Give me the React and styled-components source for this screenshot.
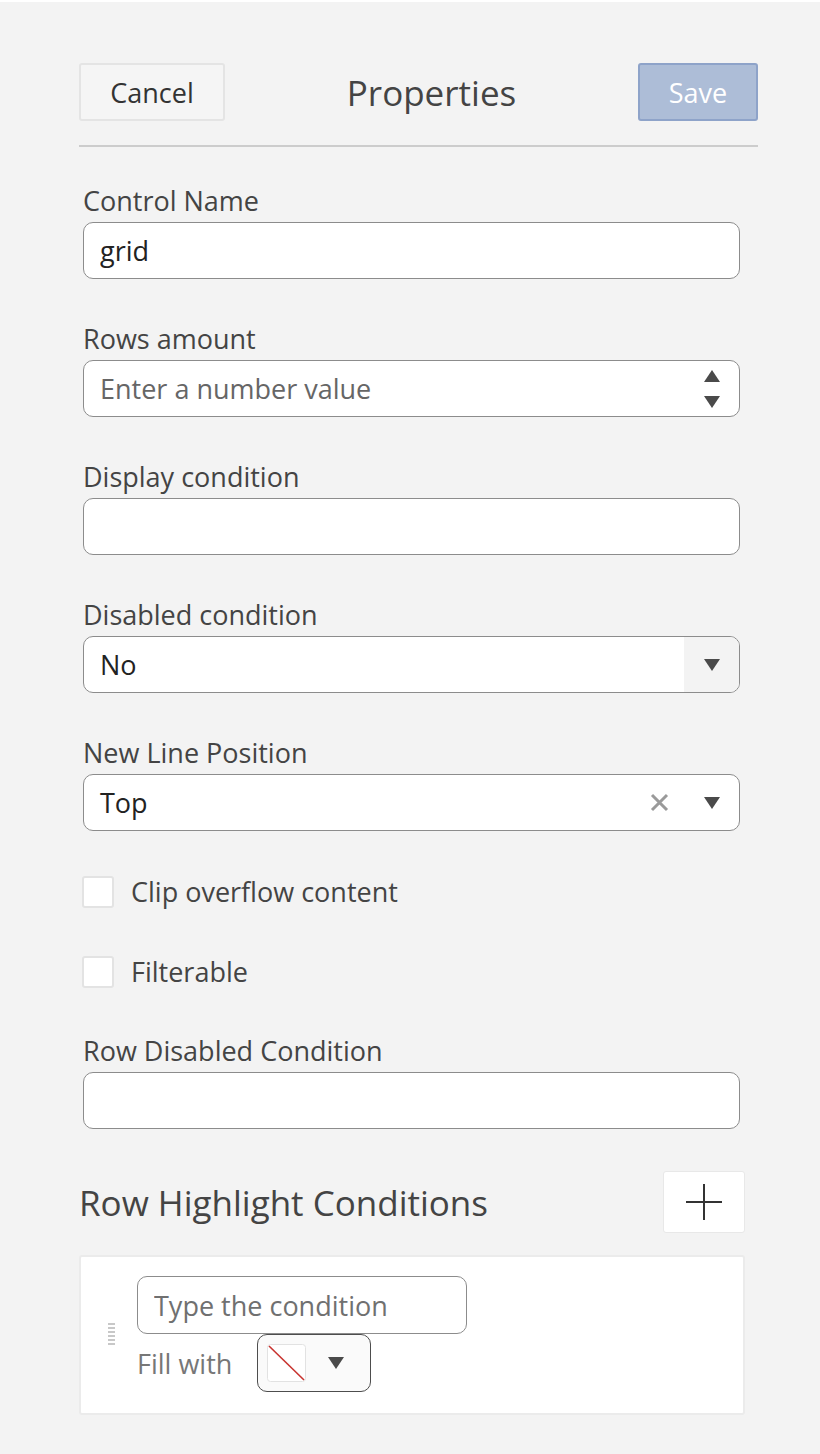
import React from 'react';
import styled, { createGlobalStyle } from 'styled-components';

const GlobalStyle = createGlobalStyle`
  html, body {
    margin: 0;
    padding: 0;
    background: #f3f3f3;
  }
  body {
    border-top: 2px solid #ffffff;
    font-family: "Open Sans", "Noto Sans", sans-serif;
    color: #444;
  }
  * { box-sizing: border-box; }
`;

const Page = styled.div`
  width: 679px;
  margin-left: 79px;
  padding-top: 61px;
  padding-bottom: 38px;
`;

const Header = styled.div`
  display: flex;
  align-items: center;
  justify-content: space-between;
  height: 58px;
`;

const HeaderButton = styled.button`
  height: 58px;
  width: ${p => (p.primary ? '120px' : '146px')};
  border-radius: 3px;
  font-family: inherit;
  font-size: 27px;
  cursor: pointer;
  background: ${p => (p.primary ? '#adbdd7' : '#f5f5f5')};
  border: 2px solid ${p => (p.primary ? '#8ea3c9' : '#e4e4e4')};
  color: ${p => (p.primary ? '#ffffff' : '#333')};
`;

const Title = styled.h1`
  margin: 0;
  font-size: 35px;
  font-weight: 400;
  color: #444;
`;

const Divider = styled.hr`
  margin: 24px 0 0;
  border: 0;
  height: 2px;
  background: #cccccc;
`;

const Form = styled.div`
  padding: 39px 18px 0 4px;
`;

const Field = styled.div`
  margin-bottom: 45px;
`;

const Label = styled.div`
  font-size: 27px;
  line-height: 30px;
  height: 30px;
  color: #444;
  margin-bottom: 6px;
`;

const InputBox = styled.div`
  display: flex;
  align-items: center;
  height: 57px;
  background: #fff;
  border: 1px solid #8c8c8c;
  border-radius: 10px;
  overflow: hidden;
`;

const TextInput = styled.input`
  flex: 1;
  min-width: 0;
  height: 100%;
  border: 0;
  outline: none;
  padding: 0 16px;
  font-family: inherit;
  font-size: 27px;
  color: #222;
  background: transparent;
  &::placeholder { color: #666; }
`;

const Triangle = styled.span`
  display: block;
  width: 0;
  height: 0;
  border-left: 8px solid transparent;
  border-right: 8px solid transparent;
  ${p => (p.up
    ? 'border-bottom: 12px solid #4a4a4a;'
    : 'border-top: 12px solid #4a4a4a;')}
`;

const Spinner = styled.div`
  display: flex;
  flex-direction: column;
  gap: 14px;
  padding-right: 19px;
`;

const SelectValue = styled.div`
  flex: 1;
  padding: 0 16px;
  font-size: 27px;
  color: #222;
`;

const ArrowZone = styled.div`
  display: flex;
  align-items: center;
  justify-content: center;
  width: 55px;
  height: 100%;
  background: ${p => (p.shaded ? '#f3f3f3' : 'transparent')};
`;

const ClearIcon = styled.svg`
  width: 19px;
  height: 19px;
  margin-right: 15px;
`;

const CheckRow = styled.label`
  display: flex;
  align-items: center;
  gap: 17px;
  height: 32px;
  margin-left: -1px;
  margin-bottom: 48px;
  font-size: 27px;
  line-height: 32px;
  color: #444;
`;

const CheckBox = styled.span`
  width: 32px;
  height: 32px;
  background: #fff;
  border: 2px solid #e3e3e3;
  border-radius: 3px;
`;

const Section = styled.div`
  width: 666px;
`;

const SectionHead = styled.div`
  display: flex;
  align-items: center;
  justify-content: space-between;
  margin-top: -3px;
`;

const SectionTitle = styled.h2`
  margin: 0;
  font-size: 35px;
  font-weight: 400;
  color: #444;
`;

const AddButton = styled.button`
  width: 82px;
  height: 62px;
  background: #fff;
  border: 1px solid #e8e8e8;
  border-radius: 3px;
  display: flex;
  align-items: center;
  justify-content: center;
  cursor: pointer;
`;

const Card = styled.div`
  margin-top: 22px;
  display: flex;
  align-items: center;
  background: #fff;
  border: 2px solid #ebebeb;
  border-radius: 3px;
  padding: 19px 0 21px 27px;
`;

const Handle = styled.div`
  width: 7px;
  height: 22px;
  margin-right: 22px;
  background: repeating-linear-gradient(
    to bottom,
    #c8c8c8 0,
    #c8c8c8 2px,
    transparent 2px,
    transparent 4px
  );
`;

const CardBody = styled.div`
  display: flex;
  flex-direction: column;
`;

const ConditionInput = styled.input`
  width: 330px;
  height: 58px;
  border: 1px solid #8c8c8c;
  border-radius: 10px;
  padding: 0 16px;
  font-family: inherit;
  font-size: 27px;
  outline: none;
  &::placeholder { color: #707070; }
`;

const FillRow = styled.div`
  display: flex;
  align-items: center;
  gap: 25px;
`;

const FillLabel = styled.span`
  font-size: 27px;
  color: #777;
`;

const ColorPicker = styled.div`
  display: flex;
  align-items: center;
  width: 114px;
  height: 58px;
  border: 1px solid #4d4d4d;
  border-radius: 10px;
  background: #fafafa;
  padding-left: 9px;
  gap: 22px;
`;

const Swatch = styled.svg`
  width: 39px;
  height: 38px;
`;

export default function App() {
  return (
    <>
      <GlobalStyle />
      <Page>
        <Header>
          <HeaderButton>Cancel</HeaderButton>
          <Title>Properties</Title>
          <HeaderButton primary>Save</HeaderButton>
        </Header>
        <Divider />
        <Form>
          <Field>
            <Label>Control Name</Label>
            <InputBox>
              <TextInput defaultValue="grid" />
            </InputBox>
          </Field>
          <Field>
            <Label>Rows amount</Label>
            <InputBox>
              <TextInput placeholder="Enter a number value" />
              <Spinner>
                <Triangle up />
                <Triangle />
              </Spinner>
            </InputBox>
          </Field>
          <Field>
            <Label>Display condition</Label>
            <InputBox>
              <TextInput />
            </InputBox>
          </Field>
          <Field>
            <Label>Disabled condition</Label>
            <InputBox>
              <SelectValue>No</SelectValue>
              <ArrowZone shaded>
                <Triangle />
              </ArrowZone>
            </InputBox>
          </Field>
          <Field>
            <Label>New Line Position</Label>
            <InputBox>
              <SelectValue>Top</SelectValue>
              <ClearIcon viewBox="0 0 19 19">
                <path d="M2 2 L17 17 M17 2 L2 17" stroke="#9a9a9a" strokeWidth="3" />
              </ClearIcon>
              <ArrowZone>
                <Triangle />
              </ArrowZone>
            </InputBox>
          </Field>
          <CheckRow>
            <CheckBox />
            Clip overflow content
          </CheckRow>
          <CheckRow>
            <CheckBox />
            Filterable
          </CheckRow>
          <Field>
            <Label>Row Disabled Condition</Label>
            <InputBox>
              <TextInput />
            </InputBox>
          </Field>
        </Form>
        <Section>
          <SectionHead>
            <SectionTitle>Row Highlight Conditions</SectionTitle>
            <AddButton>
              <svg width="38" height="38" viewBox="0 0 38 38">
                <path d="M19 1 V37 M1 19 H37" stroke="#333" strokeWidth="2" />
              </svg>
            </AddButton>
          </SectionHead>
          <Card>
            <Handle />
            <CardBody>
              <ConditionInput placeholder="Type the condition" />
              <FillRow>
                <FillLabel>Fill with</FillLabel>
                <ColorPicker>
                  <Swatch viewBox="0 0 39 38">
                    <rect x="0.5" y="0.5" width="38" height="37" rx="3" fill="#fff" stroke="#e2e2e2" />
                    <path d="M2 2 L37 36" stroke="#c8332f" strokeWidth="1.6" />
                  </Swatch>
                  <Triangle />
                </ColorPicker>
              </FillRow>
            </CardBody>
          </Card>
        </Section>
      </Page>
    </>
  );
}
